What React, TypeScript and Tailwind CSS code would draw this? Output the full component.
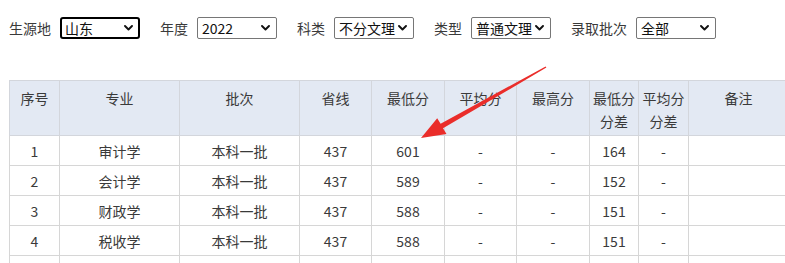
import React from 'react';

const font = { fontFamily: '"Noto Sans CJK SC", "Microsoft YaHei", sans-serif' };

interface FakeSelectProps {
  value: string;
  focused?: boolean;
}

function FakeSelect({ value, focused }: FakeSelectProps) {
  return (
    <div
      className={
        'flex items-center justify-between w-[80px] h-[22px] bg-white ' +
        (focused ? 'border-2 border-black rounded-[3px] pl-[3px] pr-[5px]' : 'border border-[#767676] rounded-[2px] pl-[4px] pr-[6px]')
      }
    >
      <span className="text-[14px] leading-none text-[#111]">{value}</span>
      <svg width="9" height="6" viewBox="0 0 9 6">
        <path d="M1 1 L4.5 4.5 L8 1" fill="none" stroke="#111" strokeWidth="1.9" strokeLinecap="round" strokeLinejoin="round" />
      </svg>
    </div>
  );
}

const filters = [
  { label: '生源地', value: '山东', focused: true },
  { label: '年度', value: '2022' },
  { label: '科类', value: '不分文理' },
  { label: '类型', value: '普通文理' },
  { label: '录取批次', value: '全部' },
];

const cols = [50, 120, 120, 72, 73, 72, 73, 49, 50, 100];

const headers: string[][] = [
  ['序号'],
  ['专业'],
  ['批次'],
  ['省线'],
  ['最低分'],
  ['平均分'],
  ['最高分'],
  ['最低分', '分差'],
  ['平均分', '分差'],
  ['备注'],
];

const rows = [
  ['1', '审计学', '本科一批', '437', '601', '-', '-', '164', '-', ''],
  ['2', '会计学', '本科一批', '437', '589', '-', '-', '152', '-', ''],
  ['3', '财政学', '本科一批', '437', '588', '-', '-', '151', '-', ''],
  ['4', '税收学', '本科一批', '437', '588', '-', '-', '151', '-', ''],
  ['', '', '', '', '', '', '', '', '', ''],
];

export default function App() {
  return (
    <div className="relative w-[785px] h-[263px] overflow-hidden bg-white text-[#3a3a3a]" style={font}>
      <div className="flex items-center pl-[9px] pt-[17px] h-[39px]">
        {filters.map((f, i) => (
          <div key={f.label} className={'flex items-center gap-[9px] ' + (i > 0 ? 'ml-[20px]' : '')}>
            <span className="text-[14px] leading-[22px]">{f.label}</span>
            <FakeSelect value={f.value} focused={f.focused} />
          </div>
        ))}
      </div>

      <div className="pl-[9px] mt-[41px]">
        <table className="table-fixed border-collapse w-[779px] text-[14px]">
          <colgroup>
            {cols.map((w, i) => (
              <col key={i} style={{ width: w }} />
            ))}
          </colgroup>
          <thead>
            <tr className="h-[55px] bg-[#e3e9f3]">
              {headers.map((h, i) => (
                <th key={i} className="border border-[#d3d6dc] align-top pt-[6px] font-normal leading-[23px] text-center">
                  {h.map((line) => (
                    <div key={line}>{line}</div>
                  ))}
                </th>
              ))}
            </tr>
          </thead>
          <tbody>
            {rows.map((r, ri) => (
              <tr key={ri} className="h-[30px]">
                {r.map((c, ci) => (
                  <td key={ci} className="border border-[#d6d6d6] text-center align-middle leading-[20px]">
                    {c}
                  </td>
                ))}
              </tr>
            ))}
          </tbody>
        </table>
      </div>

      <svg className="absolute left-0 top-0 pointer-events-none" width="785" height="263">
        <polygon
          points="421,138 446.5,134 443,128.3 546.4,67.6 545.6,66.4 440.6,123.8 437.2,118.3"
          fill="#ea2d2a"
        />
      </svg>
    </div>
  );
}
